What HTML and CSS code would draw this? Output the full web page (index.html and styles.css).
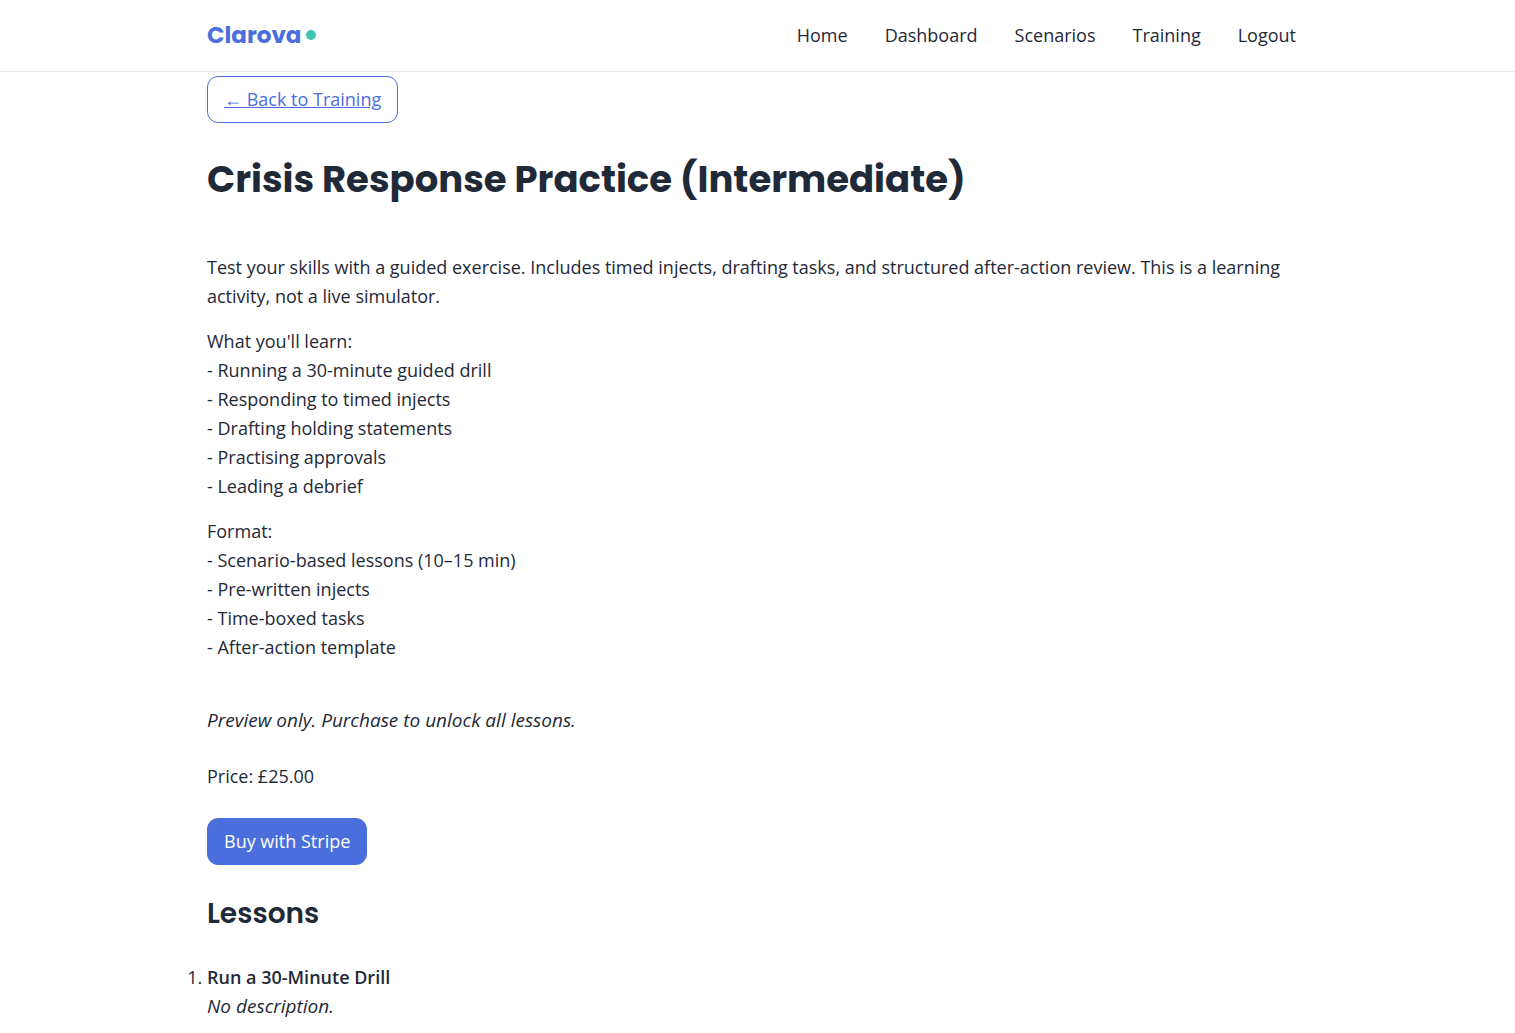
FILE: index.html
```html
<!DOCTYPE html>
<html lang="en">
<head>
<meta charset="utf-8">
<meta name="viewport" content="width=device-width, initial-scale=1">
<title>Crisis Response Practice (Intermediate) – Clarova</title>
<link rel="stylesheet" href="styles.css">
</head>
<body>
<header class="site-header">
  <div class="container header-inner">
    <a class="brand" href="#">Clarova<span class="brand-dot"></span></a>
    <nav class="nav">
      <a href="#">Home</a>
      <a href="#">Dashboard</a>
      <a href="#">Scenarios</a>
      <a href="#">Training</a>
      <a href="#">Logout</a>
    </nav>
  </div>
</header>
<main class="container">
  <a class="btn btn-outline" href="#">← Back to Training</a>
  <h1 class="title">Crisis Response Practice (Intermediate)</h1>
  <div class="description">
    <p>Test your skills with a guided exercise. Includes timed injects, drafting tasks, and structured after-action review. This is a learning activity, not a live simulator.</p>
    <p>What you'll learn:<br>- Running a 30-minute guided drill<br>- Responding to timed injects<br>- Drafting holding statements<br>- Practising approvals<br>- Leading a debrief</p>
    <p>Format:<br>- Scenario-based lessons (10–15 min)<br>- Pre-written injects<br>- Time-boxed tasks<br>- After-action template</p>
  </div>
  <p><em>Preview only. Purchase to unlock all lessons.</em></p>
  <p class="price">Price: £25.00</p>
  <button class="btn btn-primary" type="button">Buy with Stripe</button>
  <h2 class="subtitle">Lessons</h2>
  <ol class="lessons">
    <li><strong>Run a 30-Minute Drill</strong><br><em>No description.</em></li>
  </ol>
</main>
</body>
</html>
```

FILE: styles.css
```css
* {
  box-sizing: border-box;
}

body {
  margin: 0;
  background: #fff;
  color: #1f2937;
  font: 18px/29px "Open Sans", sans-serif;
}

p, h1, h2, ol {
  margin: 0;
}

em {
  font-size: 19px;
}

.container {
  max-width: 1141px;
  margin: 0 auto;
  padding: 0 20px;
}

.site-header {
  border-bottom: 1px solid #e9ebee;
}

.header-inner {
  display: flex;
  align-items: center;
  justify-content: space-between;
  height: 71px;
}

.brand {
  display: flex;
  align-items: center;
  gap: 5px;
  padding-bottom: 2px;
  color: #4a6fdc;
  font: 700 23px/32px Poppins, "Open Sans", sans-serif;
  text-decoration: none;
}

.brand-dot {
  width: 10px;
  height: 10px;
  border-radius: 50%;
  background: #40c4b2;
}

.nav {
  display: flex;
  gap: 37px;
  padding-right: 12px;
}

.nav a {
  color: inherit;
  text-decoration: none;
}

.btn {
  display: block;
  width: fit-content;
  padding: 8px 16px;
  border: 1px solid #4a6fdc;
  border-radius: 11px;
  font: inherit;
}

.btn-outline {
  margin-top: 4px;
  color: #4a6fdc;
}

.btn-primary {
  background: #4a6fdc;
  color: #fff;
}

.title {
  margin: 32px 0 50px;
  font: 700 37px/48px Poppins, "Open Sans", sans-serif;
}

.description {
  margin-bottom: 44px;
}

.description p + p {
  margin-top: 16px;
}

.price {
  margin: 27px 0;
}

.subtitle {
  margin: 29px 0;
  font: 600 28px/40px Poppins, "Open Sans", sans-serif;
}

.lessons {
  padding: 0;
}

.lessons strong {
  font-weight: 600;
}
```
